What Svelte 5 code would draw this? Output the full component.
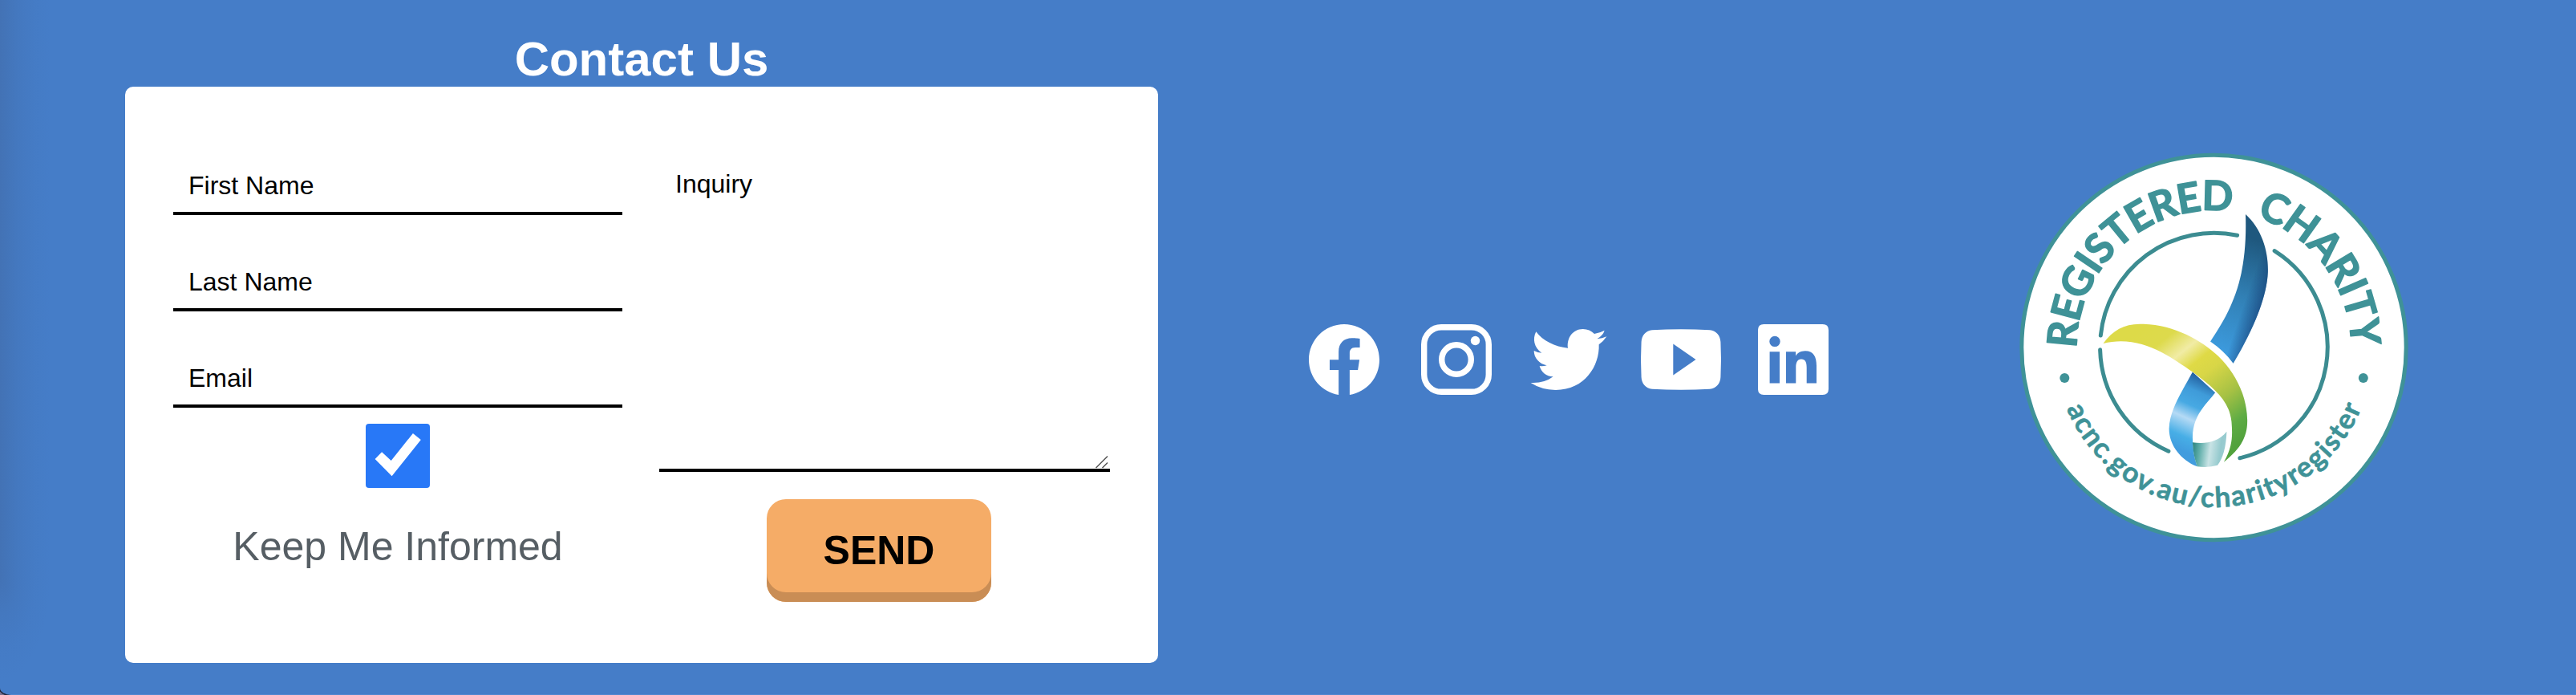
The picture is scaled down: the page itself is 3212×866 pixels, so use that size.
<script>
  const fields = ['First Name', 'Last Name', 'Email'];
</script>

<footer class="page">
  <section class="contact">
    <h2>Contact Us</h2>
    <form class="card">
      <div class="column">
        {#each fields as name}
          <div class="field">{name}</div>
        {/each}
        <div class="consent">
          <svg class="check" viewBox="0 0 80 80">
            <rect width="80" height="80" rx="4" fill="#2878f7" />
            <path d="M11.6 44 20.1 35.3 31.7 46 58.9 12 68.8 20 32.6 65.3z" fill="#fff" />
          </svg>
          <span>Keep Me Informed</span>
        </div>
      </div>
      <div class="column right">
        <div class="inquiry">
          <span>Inquiry</span>
          <svg class="grip" viewBox="0 0 16 16"><path d="M.5 15 15 .5M8.500 15 15 8.500" /></svg>
        </div>
        <button type="button">SEND</button>
      </div>
    </form>
  </section>

  <nav class="social">
    <svg viewBox="0 0 100 100"><g transform="translate(6 6) scale(5.5)"><path d="M16 8.049C16 3.603 12.418 0 8 0S0 3.603 0 8.050c0 4.017 2.926 7.347 6.750 7.951v-5.625H4.720V8.050h2.030V6.275c0-2.017 1.195-3.131 3.022-3.131.876 0 1.791.157 1.791.157v1.980h-1.009c-.993 0-1.303.621-1.303 1.258v1.510h2.218l-.354 2.326H9.251V16C13.074 15.396 16 12.066 16 8.049z" /></g></svg>
    <svg viewBox="0 0 100 100">
      <rect x="9.700" y="9.700" width="80.600" height="80.600" rx="21.500" fill="none" stroke="#fff" stroke-width="7.400" />
      <circle cx="50" cy="50" r="18.300" fill="none" stroke="#fff" stroke-width="7.400" />
      <circle cx="73.500" cy="26.500" r="5.700" />
    </svg>
    <svg viewBox="0 0 100 100"><g transform="translate(-6 -8) scale(.33333)"><path d="M46 70C70 103 117 127 165 131C160 93 184 60 221 60Q247 60 264 78Q284 75 302 65Q297 83 274 97Q294 95 310 88Q299 105 281 118C284 198 228 288 119 288Q66 287 26 261Q75 264 110 238C84 237 65 221 59 198Q73 200 86 196C58 190 38 168 38 141Q52 149 67 149C38 130 32 96 46 70Z" /></g></svg>
    <svg viewBox="0 0 100 100"><path fill-rule="evenodd" d="M14 13.200Q50 11.200 86 13.200C94 14 99 20 99.400 28Q100.600 50 99.400 72C99 80 94 86 86 86.800Q50 88.800 14 86.800C6 86 1 80 .6 72Q-.6 50 .6 28C1 20 6 14 14 13.200ZM40.300 30.500V69.500L68.500 50Z" /></svg>
    <svg viewBox="0 0 100 100"><path fill-rule="evenodd" d="M13.300 6H86.700Q94 6 94 13.300V86.700Q94 94 86.700 94H13.300Q6 94 6 86.700V13.300Q6 6 13.300 6ZM20.600 40.200V79.500H33V40.200ZM27 20.700a6.700 6.700 0 1 0 0 13.400a6.700 6.700 0 1 0 0-13.400ZM41 40.200V79.500H53.300V60C53.300 54 55 49.500 60 49.500C65 49.500 66.700 53.500 66.700 60V79.500H79V58C79 46 75 39.200 65 39.200C59 39.200 55 42 53.100 45.500V40.200Z" /></svg>
  </nav>

  <svg class="badge" viewBox="36 28 489 490">
    <defs>
      <linearGradient id="navy" gradientUnits="userSpaceOnUse" x1="950" y1="410" x2="800" y2="800">
        <stop offset="0" stop-color="#1f587e" /><stop offset=".5" stop-color="#3180b5" /><stop offset="1" stop-color="#3c9add" />
      </linearGradient>
      <linearGradient id="edge" gradientUnits="userSpaceOnUse" x1="915" y1="560" x2="975" y2="580">
        <stop offset="0" stop-color="#143a72" stop-opacity="0" /><stop offset="1" stop-color="#143a72" stop-opacity=".65" />
      </linearGradient>
      <linearGradient id="gold" gradientUnits="userSpaceOnUse" x1="540" y1="720" x2="880" y2="1130">
        <stop offset="0" stop-color="#ddda48" /><stop offset=".15" stop-color="#ddda4c" /><stop offset=".29" stop-color="#f1eca5" /><stop offset=".4" stop-color="#dfda46" /><stop offset=".5" stop-color="#d8d647" /><stop offset=".7" stop-color="#a6c144" /><stop offset=".88" stop-color="#5eac44" /><stop offset="1" stop-color="#52a23d" />
      </linearGradient>
      <linearGradient id="sky" gradientUnits="userSpaceOnUse" x1="755" y1="905" x2="640" y2="1150">
        <stop offset="0" stop-color="#23609f" /><stop offset=".2" stop-color="#3f9bd9" /><stop offset=".4" stop-color="#47a9e3" /><stop offset=".58" stop-color="#b5daf5" /><stop offset=".82" stop-color="#47aee6" /><stop offset="1" stop-color="#419cde" />
      </linearGradient>
      <linearGradient id="mint" gradientUnits="userSpaceOnUse" x1="710" y1="1170" x2="830" y2="1185">
        <stop offset="0" stop-color="#2f8783" /><stop offset=".2" stop-color="#5faeaa" /><stop offset=".5" stop-color="#c8e3e5" /><stop offset=".8" stop-color="#95cace" /><stop offset="1" stop-color="#9ccdd2" />
      </linearGradient>
      <path id="top-arc" d="M109.500 273A171 171 0 0 1 451.500 273" />
      <path id="low-arc" d="M81.500 273A199 199 0 0 0 479.500 273" />
    </defs>
    <circle cx="280.500" cy="273" r="239.700" fill="#fff" stroke="#3f9297" stroke-width="5" />
    <g fill="none" stroke="#3c8c91" stroke-width="5" stroke-linecap="round">
      <path d="M139.300 258A142 142 0 0 1 309.600 133.300" />
      <path d="M356.100 152.600A142 142 0 0 1 312.900 410.800" />
      <path d="M223.900 402.200A142 142 0 0 1 138.600 275.800" />
    </g>
    <circle cx="94.300" cy="311" r="6" fill="#3f9297" />
    <circle cx="466.800" cy="311" r="6" fill="#3f9297" />
    <text class="ring-top"><textPath href="#top-arc" startOffset="-1" textLength="293">REGISTERED</textPath></text>
    <text class="ring-top"><textPath href="#top-arc" startOffset="322" textLength="214">CHARITY</textPath></text>
    <text class="ring-low"><textPath href="#low-arc" startOffset="78" textLength="470">acnc.gov.au/charityregister</textPath></text>
    <g transform="scale(.35714 .34439)">
      <path d="M896 311C953 365 976 445 974 520C970 620 915 742 853 850Q822 806 773 771C853 648 903 535 896 311Z" fill="url(#navy)" />
      <path d="M896 311C953 365 976 445 974 520C970 620 915 742 853 850Q822 806 773 771C853 648 903 535 896 311Z" fill="url(#edge)" />
      <path d="M711 881L790 956C752 1006 712 1040 711 1118Q711 1175 727 1223C670 1200 628 1145 629 1085C630 1020 675 950 711 881Z" fill="url(#sky)" />
      <path d="M711 1136C755 1142 799 1137 830 1097Q827 1180 798 1219Q765 1229 727 1223Q713 1182 711 1136Z" fill="url(#mint)" />
      <path d="M399 778C435 727 477 704 540 708C650 711 744 770 800 823C860 883 900 965 902 1055C903 1115 880 1158 820 1207C853 1150 850 1105 847 1062C839 985 790 942 711 881C635 827 530 744 399 778Z" fill="url(#gold)" />
    </g>
  </svg>
</footer>

<style>
  :global(body) { margin: 0; background: #77718f; overflow: hidden; }
  * { box-sizing: border-box; }
  .page {
    display: flex;
    align-items: flex-start;
    height: 866px;
    padding-left: 156px;
    overflow: hidden;
    border-bottom: 1px solid #5187d0;
    border-bottom-left-radius: 14px 9px;
    box-shadow: 0 0 0 1.5px #20243a;
    background:
      radial-gradient(ellipse 64px 130px at 0 0, rgba(60, 80, 120, .24), rgba(60, 80, 120, .11) 35%, rgba(60, 80, 120, .03) 70%, transparent) 0 720px / 64px 146px no-repeat,
      linear-gradient(90deg, rgba(60, 80, 120, .24), rgba(60, 80, 120, .11) 35%, rgba(60, 80, 120, .03) 70%, transparent) 0 0 / 64px 720px no-repeat,
      #457dc8;
    font-family: "Liberation Sans", Arial, sans-serif;
  }
  .contact { width: 1288px; }
  h2 { margin: 0; height: 108px; padding-top: 39px; color: #fff; font-size: 60px; line-height: 69px; text-align: center; }
  .card { display: flex; gap: 46px; height: 718px; margin: 0; padding: 40px 60px 0; border-radius: 10px; background: #fff; }
  .column { width: 560px; }
  .field { height: 120px; padding: 65px 19px 0; border-bottom: 4px solid #000; font-size: 32px; line-height: 37px; }
  .consent { display: flex; flex-direction: column; align-items: center; padding-top: 20px; color: #565e64; font-size: 50px; }
  .consent span { margin-top: 44px; line-height: 58px; }
  .check { width: 80px; height: 80px; }
  .right { display: flex; flex-direction: column; align-items: center; width: 562px; }
  .inquiry { display: flex; justify-content: space-between; width: 562px; height: 440px; padding: 63px 2px 0 20px; border-bottom: 4px solid #000; font-size: 32px; line-height: 37px; }
  .grip { align-self: flex-end; width: 16px; height: 16px; fill: none; stroke: #555; stroke-width: 1.5; }
  button { width: 280px; height: 128px; margin: 34px 14px 0 0; padding: 0 0 1px; border: 0; border-radius: 24px; background: #f5ac67; box-shadow: inset 0 -12px #c98d55; color: #000; font: bold 50px "Liberation Sans", Arial, sans-serif; }
  .social { display: flex; gap: 40px; margin: 398px 0 0 182px; }
  .social svg { flex: none; width: 100px; height: 100px; fill: #fff; overflow: visible; }
  .badge { flex: none; width: 489px; height: 490px; margin: 188px 0 0 230px; }
  .ring-top { fill: #3f9297; stroke: #3f9297; stroke-width: 1.5; stroke-linejoin: round; font: 700 51px Lato, sans-serif; }
  .ring-low { fill: #3f9297; stroke: #3f9297; stroke-width: .6; stroke-linejoin: round; font: bold 35px Lato, sans-serif; }
</style>
